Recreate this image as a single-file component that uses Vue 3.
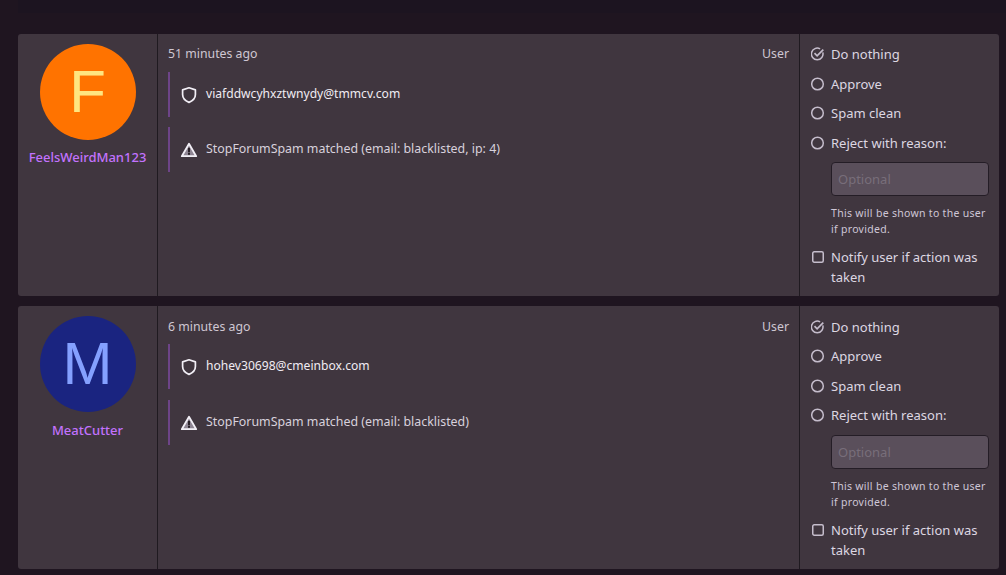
<script setup>
const actions = ['Approve', 'Spam clean', 'Reject with reason:']

const items = [
  {
    name: 'FeelsWeirdMan123',
    letter: 'F',
    avatarBg: '#ff7300',
    avatarFg: '#ffe680',
    time: '51 minutes ago',
    email: 'viafddwcyhxztwnydy@tmmcv.com',
    reason: 'StopForumSpam matched (email: blacklisted, ip: 4)',
  },
  {
    name: 'MeatCutter',
    letter: 'M',
    avatarBg: '#1a2480',
    avatarFg: '#84a0ff',
    time: '6 minutes ago',
    email: 'hohev30698@cmeinbox.com',
    reason: 'StopForumSpam matched (email: blacklisted)',
  },
]
</script>

<template>
  <div class="page">
    <div class="top-strip"></div>
    <div class="queue">
      <div v-for="item in items" :key="item.name" class="card">
        <div class="user-col">
          <div class="avatar" :style="{ background: item.avatarBg, color: item.avatarFg }">{{ item.letter }}</div>
          <div class="username">{{ item.name }}</div>
        </div>

        <div class="main-col">
          <div class="meta">
            <span>{{ item.time }}</span>
            <span>User</span>
          </div>
          <div class="note">
            <svg class="note-icon" viewBox="0 0 18 18" width="18" height="18">
              <path d="M9 1.8 L15.4 3.9 V8.6 C15.4 12.3 12.8 14.9 9 16.4 C5.2 14.9 2.6 12.3 2.6 8.6 V3.9 Z" fill="none" stroke="#f2eff6" stroke-width="1.7" stroke-linejoin="round"/>
            </svg>
            <span class="note-text email">{{ item.email }}</span>
          </div>
          <div class="note">
            <svg class="note-icon" viewBox="0 0 18 18" width="18" height="18">
              <path d="M9 2.8 L16.2 15.2 H1.8 Z" fill="#8e8593" stroke="#f2eff6" stroke-width="1.8" stroke-linejoin="round"/>
              <rect x="8" y="6.8" width="2" height="4.6" fill="#2a2229"/>
              <rect x="8" y="12" width="2" height="1.8" fill="#2a2229"/>
            </svg>
            <span class="note-text reason">{{ item.reason }}</span>
          </div>
        </div>

        <div class="action-col">
          <div class="option">
            <svg class="radio" viewBox="0.5 0 14 14" width="14" height="14">
              <path d="M12.3 5.4 A5.8 5.8 0 1 1 9.6 1.9" fill="none" stroke="#c5bdcc" stroke-width="1.5"/>
              <path d="M4 6.2 L6.6 8.8 L12.8 2.6" fill="none" stroke="#c5bdcc" stroke-width="1.7"/>
            </svg>
            <span>Do nothing</span>
          </div>
          <div v-for="action in actions" :key="action" class="option">
            <svg class="radio" viewBox="0.5 0 14 14" width="14" height="14">
              <circle cx="7" cy="7" r="5.8" fill="none" stroke="#c5bdcc" stroke-width="1.5"/>
            </svg>
            <span>{{ action }}</span>
          </div>
          <input class="reason-input" type="text" placeholder="Optional" />
          <p class="hint">This will be shown to the user if provided.</p>
          <div class="option notify">
            <svg class="check-box" viewBox="0 0 14 14" width="14" height="14">
              <rect x="1.75" y="1.75" width="10.5" height="10.5" rx="1.5" fill="none" stroke="#c5bdcc" stroke-width="1.5"/>
            </svg>
            <span>Notify user if action was taken</span>
          </div>
        </div>
      </div>
    </div>
  </div>
</template>

<style scoped>
.page {
  height: 575px;
  overflow: hidden;
  background: #1f1520;
  font-family: "Noto Sans", "Open Sans", sans-serif;
  color: #e6e0ea;
  position: relative;
}

.top-strip {
  position: absolute;
  top: 0;
  left: 18px;
  right: 0;
  height: 13px;
  background: #1c1420;
}

.queue {
  padding: 34px 7px 0 18px;
  display: flex;
  flex-direction: column;
  gap: 10px;
}

.card {
  display: flex;
  height: 262.4px;
  background: #40363f;
  border-radius: 3px;
}

.user-col {
  width: 139px;
  flex: none;
  border-right: 1px solid #1f1a20;
  padding-top: 10px;
  display: flex;
  flex-direction: column;
  align-items: center;
}

.avatar {
  width: 96px;
  height: 96px;
  border-radius: 50%;
  display: flex;
  align-items: center;
  justify-content: center;
  font-family: "Liberation Sans", Arial, sans-serif;
  font-size: 60px;
  line-height: 94px;
}

.username {
  margin-top: 8.2px;
  font-size: 13px;
  font-weight: 500;
  color: #c272fd;
}

.main-col {
  flex: 1;
  min-width: 0;
  padding: 11.2px 10px 0 10px;
  font-size: 12.3px;
}

.meta {
  display: flex;
  justify-content: space-between;
  color: #cfc7d2;
  line-height: 17px;
  margin-bottom: 9.8px;
}

.note {
  display: flex;
  align-items: flex-start;
  height: 45px;
  margin-bottom: 10.3px;
  padding: 14px 0 0 10px;
  border-left: 2px solid #6d4488;
  box-sizing: border-box;
}

.note-icon {
  flex: none;
  margin-right: 8px;
}

.note-text {
  line-height: 16px;
  color: #d8d1dc;
}

.email {
  font-size: 12.1px;
  color: #f0ecf3;
}

.reason {
  font-size: 12.4px;
}

.action-col {
  width: 200px;
  flex: none;
  border-left: 1px solid #1f1a20;
  box-sizing: border-box;
  padding: 5.7px 10px 0 11px;
  font-size: 13px;
}

.option {
  display: flex;
  align-items: center;
  gap: 6px;
  height: 29.5px;
  line-height: 20px;
  color: #ddd7e2;
}

.radio {
  flex: none;
}

.reason-input {
  display: block;
  box-sizing: border-box;
  width: 158px;
  height: 34px;
  margin: 4.5px 0 0 20px;
  padding: 0 6px;
  background: #5a4f5b;
  border: 1px solid #241d26;
  border-radius: 4px;
  font: inherit;
  color: #e6e0ea;
  outline: none;
}

.reason-input::placeholder {
  color: #786e7a;
  opacity: 1;
}

.hint {
  margin: 10.3px 0 0 20px;
  font-size: 10.5px;
  line-height: 15.8px;
  letter-spacing: 0.3px;
  color: #cfc7d6;
}

.notify {
  height: auto;
  align-items: flex-start;
  margin-top: 9.1px;
}

.check-box {
  flex: none;
  margin-top: 3px;
}
</style>
